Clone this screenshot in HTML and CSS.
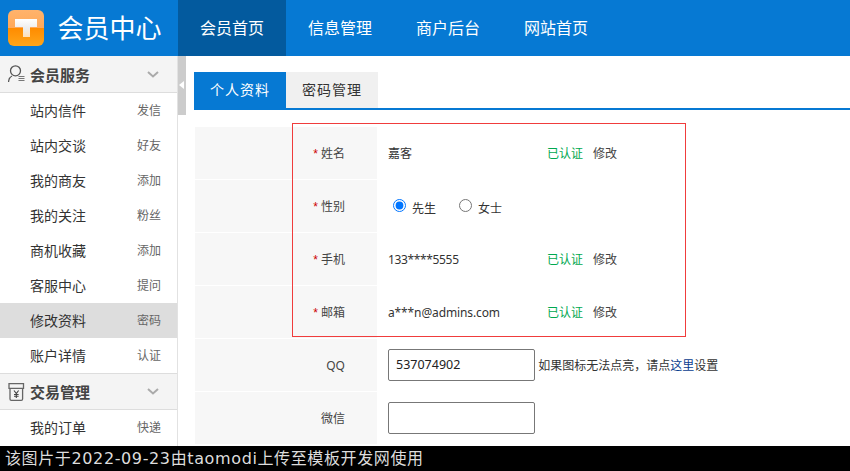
FILE: index.html
```html
<!DOCTYPE html>
<html lang="zh">
<head>
<meta charset="utf-8">
<title>会员中心</title>
<link rel="stylesheet" href="styles.css">
</head>
<body>
<header class="topbar">
  <div class="brand">
    <svg class="logo" width="36" height="36" viewBox="0 0 36 36">
      <defs>
        <linearGradient id="lg" x1="0" y1="0" x2="0" y2="1">
          <stop offset="0" stop-color="#ffb36c"/>
          <stop offset="0.49" stop-color="#ffa95a"/>
          <stop offset="0.51" stop-color="#ff8c00"/>
          <stop offset="1" stop-color="#ffa51a"/>
        </linearGradient>
        <linearGradient id="tg" x1="0" y1="0" x2="0" y2="1">
          <stop offset="0" stop-color="#ffffff"/>
          <stop offset="0.5" stop-color="#eeeeee"/>
          <stop offset="1" stop-color="#ffe0b8"/>
        </linearGradient>
      </defs>
      <rect width="36" height="36" rx="6" fill="url(#lg)"/>
      <path d="M7 9h22v8h-7v10h-7V17H7z" fill="url(#tg)"/>
    </svg>
    <span class="brand-name">会员中心</span>
  </div>
  <nav class="mainnav">
    <a class="navitem active">会员首页</a>
    <a class="navitem">信息管理</a>
    <a class="navitem">商户后台</a>
    <a class="navitem">网站首页</a>
  </nav>
</header>
<div class="body">
  <aside class="sidebar">
    <div class="sec-head">
      <svg class="sec-icon" width="17" height="18" viewBox="0 0 17 18" fill="none" stroke="#555" stroke-width="1.300">
        <circle cx="7.500" cy="5.800" r="5"/>
        <path d="M4 11C2 12 .8 14 .5 17"/>
        <path d="M10.500 11.500h6M10.500 13.500h6M10.500 15.500h6" stroke-width="1.100" stroke="#777"/>
      </svg>
      <span class="sec-title">会员服务</span>
      <svg class="chev" width="12" height="7" viewBox="0 0 12 7" fill="none" stroke="#aaa" stroke-width="2"><path d="M1 1l5 4.500L11 1"/></svg>
    </div>
    <a class="item"><span>站内信件</span><small>发信</small></a>
    <a class="item"><span>站内交谈</span><small>好友</small></a>
    <a class="item"><span>我的商友</span><small>添加</small></a>
    <a class="item"><span>我的关注</span><small>粉丝</small></a>
    <a class="item"><span>商机收藏</span><small>添加</small></a>
    <a class="item"><span>客服中心</span><small>提问</small></a>
    <a class="item current"><span>修改资料</span><small>密码</small></a>
    <a class="item"><span>账户详情</span><small>认证</small></a>
    <div class="sec-head">
      <svg class="sec-icon" width="17" height="18" viewBox="0 0 17 18" fill="none" stroke="#666" stroke-width="1.300">
        <path d="M1 .7h14.500v4.600H1z"/>
        <path d="M2 5.300V16a1.300 1.300 0 0 0 1.300 1.300h10A1.300 1.300 0 0 0 14.600 16V5.300"/>
        <path d="M6 7.500l2.300 3 2.300-3M8.300 10.500v4.500M6 11.500h4.600M6 13.300h4.600" stroke-width="1.100" stroke="#444"/>
      </svg>
      <span class="sec-title">交易管理</span>
      <svg class="chev" width="12" height="7" viewBox="0 0 12 7" fill="none" stroke="#aaa" stroke-width="2"><path d="M1 1l5 4.500L11 1"/></svg>
    </div>
    <a class="item"><span>我的订单</span><small>快递</small></a>
  </aside>
  <div class="handle"><i class="handle-arrow"></i></div>
  <main class="content">
    <div class="tabs">
      <a class="tab on">个人资料</a>
      <a class="tab">密码管理</a>
    </div>
    <table class="form">
      <tr><th><em>*</em> 姓名</th><td><span class="val">嘉客</span><span class="ok">已认证</span><a class="edit">修改</a></td></tr>
      <tr><th><em>*</em> 性别</th><td class="sex"><label class="radio"><input type="radio" name="sex" checked><span class="radio-text">先生</span></label><label class="radio"><input type="radio" name="sex"><span class="radio-text">女士</span></label></td></tr>
      <tr><th><em>*</em> 手机</th><td><span class="val phone">133****5555</span><span class="ok">已认证</span><a class="edit">修改</a></td></tr>
      <tr><th><em>*</em> 邮箱</th><td><span class="val mail">a***n@admins.com</span><span class="ok">已认证</span><a class="edit">修改</a></td></tr>
      <tr><th>QQ</th><td><input class="txt" type="text" value="537074902"> <span class="hint">如果图标无法点亮，请点<a class="link">这里</a>设置</span></td></tr>
      <tr><th>微信</th><td><input class="txt" type="text"></td></tr>
    </table>
    <div class="redbox"></div>
  </main>
</div>
<footer class="watermark">该图片于2022-09-23由taomodi上传至模板开发网使用</footer>
</body>
</html>
```
FILE: styles.css
```css
* { box-sizing: border-box; }
html, body { height: 100%; }
body {
  margin: 0;
  height: 471px;
  overflow: hidden;
  position: relative;
  background: #fff;
  color: #333;
  font: 12px "Noto Sans", "DejaVu Sans", "Noto Sans CJK SC", sans-serif;
}
a { color: inherit; text-decoration: none; }
.topbar { display: flex; height: 56px; background: #0679d3; color: #fff; }
.brand { width: 178px; display: flex; align-items: center; padding-left: 8px; gap: 14px; }
.brand-name { font-size: 26px; line-height: 36px; margin-left: -.5px; }
.mainnav { display: flex; }
.navitem { width: 108px; font-size: 16px; line-height: 56px; text-align: center; }
.navitem.active { background: #035a9e; }
.body { display: flex; height: 415px; }
.sidebar { width: 178px; flex: none; border-right: 1px solid #e2e2e2; overflow: hidden; }
.sec-head {
  display: flex; align-items: center; height: 37px;
  background: #f4f4f4; border-bottom: 1px solid #ddd; padding: 0 18px 0 8px;
}
.sec-icon { flex: none; margin-right: 5px; }
.sec-title { font-size: 15px; font-weight: 700; color: #444; flex: 1; }
.item {
  display: flex; justify-content: space-between; align-items: center;
  height: 35px; padding: 0 16px 2px 30px; font-size: 14px; color: #333;
}
.item small { font-size: 12px; color: #666; }
.item.current { background: #dddddd; }
.item + .sec-head { border-top: 1px solid #ddd; }
.handle { width: 8px; height: 59px; background: #ccc; flex: none; position: relative; }
.handle-arrow {
  position: absolute; left: 1px; top: 25px;
  border: 4px solid transparent; border-left: 0; border-right: 5px solid #fff;
}
.content { flex: 1; padding: 16px 0 0 8px; position: relative; overflow: hidden; }
.tabs { display: flex; height: 38px; border-bottom: 2px solid #0679d3; margin-bottom: 17px; }
.tab { width: 92px; height: 36px; line-height: 36px; text-align: center; font-size: 14px; letter-spacing: 1px; background: #f0f0f0; color: #333; }
.tab.on { background: #0679d3; color: #fff; }
.form { border-collapse: separate; border-spacing: 0; margin-left: 1px; }
.form tr { height: 53px; }
.form th {
  width: 182px; padding: 0 32px 0 0; text-align: right; font-weight: 400;
  background: #f7f7f7; border-bottom: 1px solid #fff; color: #444; font-size: 12px;
}
.form th em { color: #c00; font-style: normal; font-family: "Liberation Sans", sans-serif; }
.form td { padding: 0 0 2px 11px; white-space: nowrap; }
.form td.sex { padding-bottom: 0; }
.val { display: inline-block; width: 159px; }
.phone { letter-spacing: -.35px; }
.mail { letter-spacing: -.12px; }
.ok { color: #00a850; margin-right: 10px; }
.edit { color: #444; }
.radio { display: inline-flex; align-items: center; margin: 0 0 0 5px; width: 61px; }
.radio input { margin: 0 6px 0 0; }
.radio-text { position: relative; top: 2px; }
.txt { width: 147px; height: 32px; border: 1px solid #777; border-radius: 2px; padding: 0 7px; font: 12.500px "Noto Sans", "DejaVu Sans", sans-serif; color: #222; vertical-align: middle; }
.hint { color: #333; position: relative; top: 2px; }
.link { color: #0a3d8f; }
.redbox { position: absolute; left: 106px; top: 67px; width: 394px; height: 214px; border: 1px solid #f03c3c; pointer-events: none; }
.watermark {
  position: absolute; left: 0; right: 0; bottom: 0; height: 25px;
  background: #000; color: #ddd; font-size: 16px; line-height: 25px; padding-left: 5px;
  letter-spacing: .62px;
  font-family: "DejaVu Sans", "Noto Sans CJK SC", sans-serif;
}
```
